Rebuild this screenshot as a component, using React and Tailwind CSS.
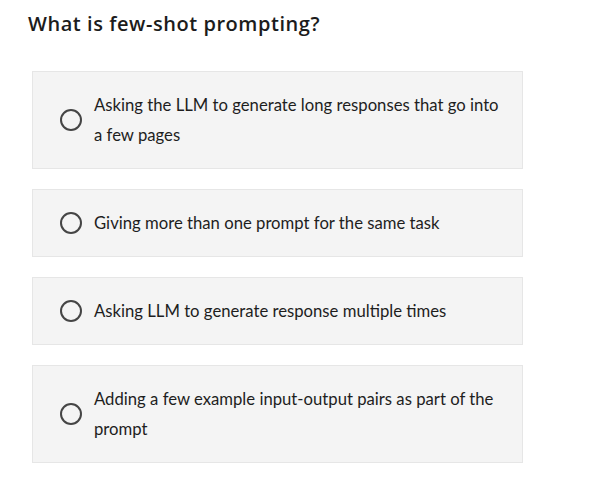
import { useState } from 'react';

const options = [
    'Asking the LLM to generate long responses that go into a few pages',
    'Giving more than one prompt for the same task',
    'Asking LLM to generate response multiple times',
    'Adding a few example input-output pairs as part of the prompt',
];

function App() {
    const [selected, setSelected] = useState(null);

    return (
        <div className="min-h-screen bg-white pt-[10px] pl-[28px]">
            <h2 className="text-[20px] leading-[28px] font-semibold text-[#1c1c1c] tracking-[0.55px]" style={{ fontFamily: '"Open Sans", "Liberation Sans", sans-serif' }}>
                What is few-shot prompting?
            </h2>
            <div className="mt-[33px] ml-[4px] w-[491px] flex flex-col gap-[20px]">
                {options.map((text, i) => (
                    <button
                        key={i}
                        type="button"
                        onClick={() => setSelected(i)}
                        className="flex items-center text-left bg-[#f4f4f4] border border-[#e6e6e6] pl-[27px] pr-[22px] py-[18px]"
                    >
                        <span className="shrink-0 w-[22px] h-[22px] rounded-full border-[2.5px] border-[#454545] flex items-center justify-center">
                            {selected === i && <span className="w-[10px] h-[10px] rounded-full bg-[#454545]" />}
                        </span>
                        <span className="ml-[12px] text-[16.7px] leading-[30px] text-[#1e1e1e]" style={{ fontFamily: 'Lato, "Liberation Sans", sans-serif' }}>
                            {text}
                        </span>
                    </button>
                ))}
            </div>
        </div>
    );
}

export default App;
